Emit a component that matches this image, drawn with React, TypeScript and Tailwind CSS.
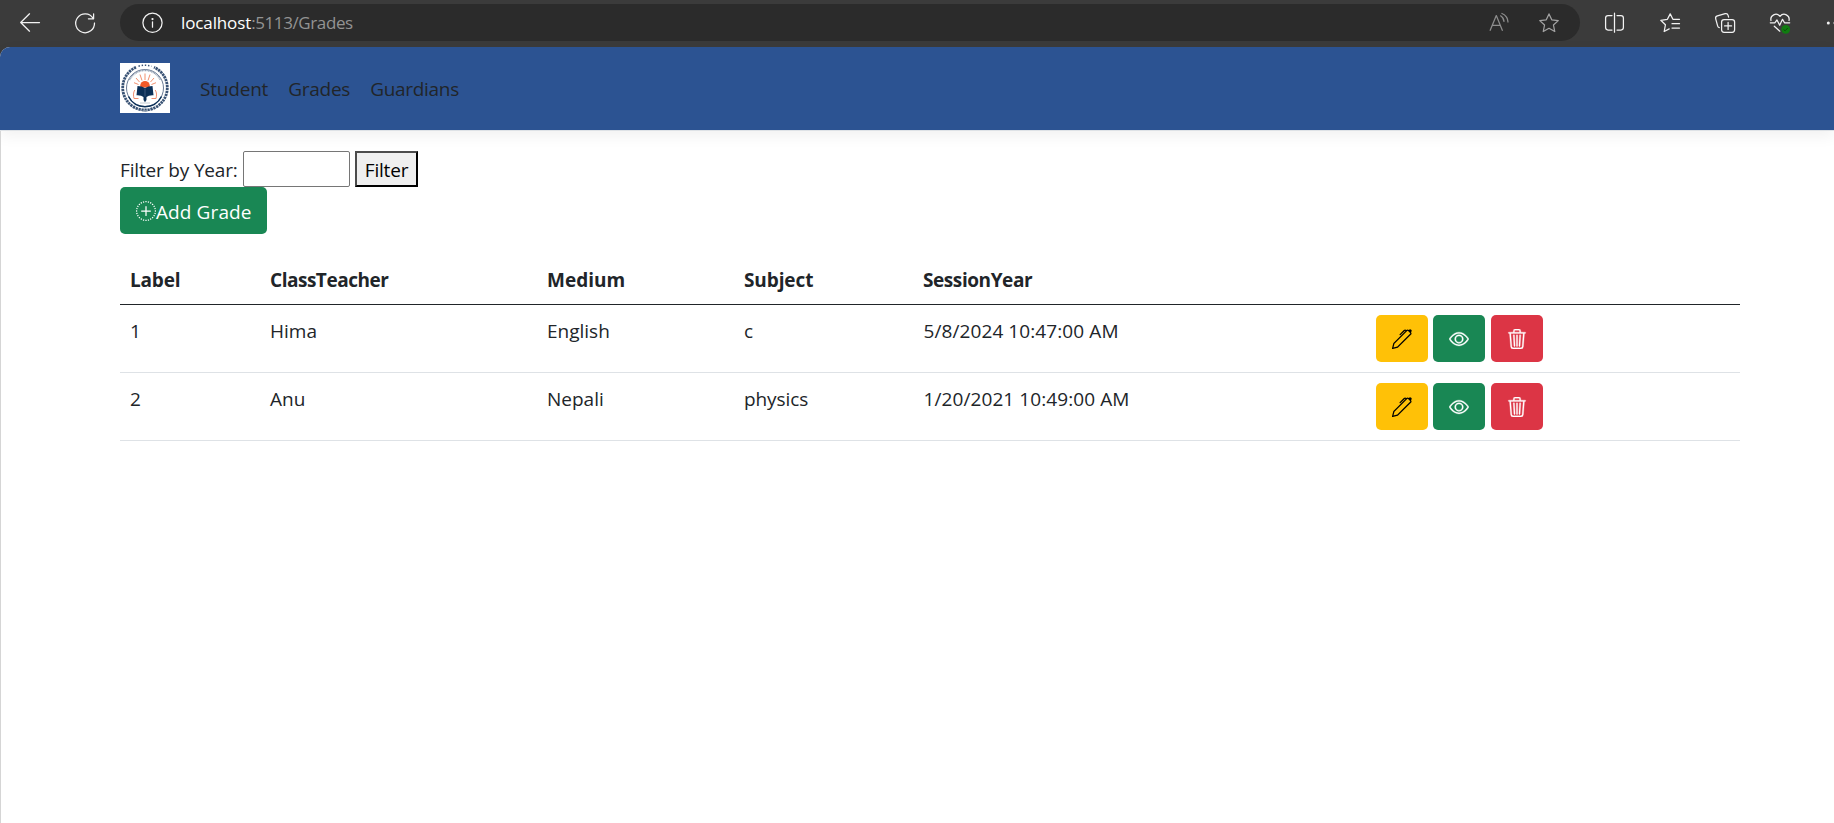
import type { ReactNode } from "react";
import { BsEye, BsPen, BsPlusCircleDotted, BsTrash3 } from "react-icons/bs";

function Glyph({ children, className = "" }: { children: ReactNode; className?: string }) {
  return (
    <svg
      viewBox="0 0 20 20"
      width="20"
      height="20"
      fill="none"
      stroke="currentColor"
      strokeWidth="1.25"
      strokeLinecap="round"
      strokeLinejoin="round"
      className={`shrink-0 overflow-visible ${className}`}
    >
      {children}
    </svg>
  );
}

function BrowserBar() {
  return (
    <div className="flex h-[47px] w-full overflow-hidden bg-[#3b3b3b] pt-1 text-[#f2f2f2]">
      <div className="flex h-[38px] items-center pl-5">
        <Glyph>
          <path d="M19.500 9.500H.8M9.500.8.7 9.500l8.800 8.700" />
        </Glyph>
        <Glyph className="ml-[35px]">
          <path d="M18 5.200A9.400 9.400 0 1 0 19.500 10M18.600.8v5h-5.200" />
        </Glyph>
        <div className="ml-[25px] flex h-[37px] w-[1460px] items-center self-start rounded-full bg-[#2b2b2b] pt-px pr-[21px] pl-[22px]">
          <Glyph>
            <circle cx="10.500" cy="9.800" r="9.600" />
            <path d="M10.500 8.800v5.400" />
            <circle cx="10.500" cy="6" r=".5" fill="currentColor" />
          </Glyph>
          <div className="ml-[19px] text-[17px] leading-6 text-[#939393]">
            <span className="tracking-[-0.12px] text-white">localhost</span>
            <span className="tracking-[-0.4px]">:5113/Grades</span>
          </div>
          <Glyph className="ml-auto text-[#8d8d8d]">
            <path d="M1.200 17.300 7.300 2.600l6 14.700M3.400 12.300h7.800M11.600 2.800c2 1.200 3.200 3.100 3.400 5.600M12.900.5c3.500 1.500 5.900 4.600 6.100 8.500" />
          </Glyph>
          <Glyph className="ml-[30px] text-[#a3a3a3]">
            <path d="m10 .9 2.750 5.900 6.500.8-4.800 4.400 1.300 6.500L10 15.300l-5.750 3.200 1.300-6.500L.75 7.600l6.500-.8Z" />
          </Glyph>
        </div>
        <Glyph className="ml-[25px]">
          <path d="M7 2.500H3A2.400 2.400 0 0 0 .6 4.900v9.700A2.400 2.400 0 0 0 3 17h4M12 2.500h4a2.400 2.400 0 0 1 2.400 2.400v9.700A2.400 2.400 0 0 1 16 17h-4M9.500.2v19" />
        </Glyph>
        <Glyph className="ml-[35px]">
          <path d="M19.500 6.300h-6.600L10.200.9 7.400 6.300.8 7.300l4.600 4.500-1.200 6.700 5-2.600M12 10.700h7.500M12 15h7.500" />
        </Glyph>
        <Glyph className="ml-[35px]">
          <rect x="6.600" y="6.500" width="13" height="12.800" rx="2.500" />
          <path d="M13.100 9.400v7M9.600 12.900h7M13.600 4.200l-.5-1.800A2.400 2.400 0 0 0 10.200.7L2.400 2.900A2.400 2.400 0 0 0 .7 5.800l2 7.300c.2.800.8 1.400 1.600 1.600" />
        </Glyph>
        <Glyph className="ml-[35px]">
          <path d="M1 7.500C-.2 2.600 6.300-1.200 10 3.400c3.700-4.600 10.200-.8 9 4.100M.3 9.800h4.500L7 7l2.700 5.300 2.800-6 2 3.500h5.200M4.300 13.200l5.500 5" />
          <circle cx="15.700" cy="16.300" r="4.400" fill="#107c10" stroke="none" />
          <path d="m13.900 16.800 1.200 1 2.400-2.500" stroke="#0b4d0b" strokeWidth="1" />
        </Glyph>
        <Glyph className="ml-[36px]">
          <circle cx="2.300" cy="10" r="1.500" fill="currentColor" stroke="none" />
          <circle cx="9" cy="10" r="1.500" fill="currentColor" stroke="none" />
        </Glyph>
      </div>
    </div>
  );
}

function Logo() {
  return (
    <svg viewBox="0 0 50 50" width="50" height="50" className="mb-px shrink-0 bg-white">
      <g fill="none" stroke="#3a5375">
        <path d="M16 4.300A22.300 22.300 0 1 0 34 4.300" strokeWidth="2.800" strokeDasharray="2.300 .7" />
        <circle cx="25" cy="25" r="18.500" stroke="#44597a" strokeWidth=".8" />
        <path d="M8.500 33.500A18.500 18.500 0 0 0 41.500 33.500" stroke="#0b2f57" strokeWidth="1.500" />
        <path d="M9.500 17a17.300 17.300 0 0 1 31 0" stroke="#93a0b3" strokeWidth="1.600" strokeDasharray="1 .6" />
        <path d="M18.500 3.200q6.500-1.900 13 0" strokeWidth="1.500" strokeDasharray="1.400 1.800" />
        <path d="M22.500 47.800h5" stroke="#8796a9" strokeWidth="1.300" />
        <path d="M20 40h10" stroke="#b5bfca" strokeWidth=".8" />
      </g>
      <path
        d="M25 17v-6.500M22 17.500l-2-6M28 17.500l2-6M19.500 19l-3.500-4M30.500 19l3.500-4M18.500 21.500l-4.500-1.800M31.500 21.500l4.500-1.800"
        stroke="#f2906f"
        strokeWidth="1"
      />
      <path d="M20.300 24.500v-2.200a4.700 4.300 0 0 1 9.400 0v2.200Z" fill="#f15a29" />
      <path d="M14.800 27c-1.600 2.500-1.600 5.500-.8 8.500h4.500M35.200 27c1.600 2.500 1.600 5.500.8 8.500h-4.500" fill="none" stroke="#f08d6e" strokeWidth="1" />
      <path d="M17.500 23q4.500 0 7.500 1.900 3-1.900 7.500-1.900l1 9.300q-4.800-.3-7 1.700v3l-1.500 2.200-1.500-2.200v-3q-2.200-2-7-1.700Z" fill="#0b2f57" />
      <path d="M25 25.500v8" stroke="#6d83a0" strokeWidth=".5" />
    </svg>
  );
}

function Navbar() {
  return (
    <header className="flex h-[84px] w-full items-center rounded-tl-[10px] border-b border-[#dee2e6] bg-[#2c5392] pl-[120px] text-[#212529] shadow-[0_5px_15px_rgba(0,0,0,0.06)]">
      <Logo />
      <nav className="ml-[30px] flex gap-5 pt-px leading-[30px]">
        <a className="tracking-[-0.2px]">Student</a>
        <a className="tracking-[-0.25px]">Grades</a>
        <a className="tracking-[-0.3px]">Guardians</a>
      </nav>
    </header>
  );
}

const headings = [
  { text: "Label", fit: "tracking-[-0.2px]" },
  { text: "ClassTeacher", fit: "tracking-[-0.48px]" },
  { text: "Medium", fit: "tracking-[0px]" },
  { text: "Subject", fit: "tracking-[-0.1px]" },
  { text: "SessionYear", fit: "tracking-[-0.42px]" },
];

const grades = [
  { label: "1", teacher: "Hima", medium: "English", subject: "c", session: "5/8/2024 10:47:00 AM" },
  { label: "2", teacher: "Anu", medium: "Nepali", subject: "physics", session: "1/20/2021 10:49:00 AM" },
];

const cell = "border-b border-[#dee2e6] px-[10px] pt-[11px] pb-0 text-left align-top leading-[30px]";
const action = "flex h-[47px] w-[52px] items-center justify-center rounded-[5px]";

function GradesTable() {
  return (
    <table className="mt-5 w-full table-fixed border-separate border-spacing-0">
      <colgroup>
        <col className="w-[140px]" />
        <col className="w-[277px]" />
        <col className="w-[197px]" />
        <col className="w-[179px]" />
        <col className="w-[453px]" />
        <col />
      </colgroup>
      <thead>
        <tr>
          {headings.map((h) => (
            <th
              key={h.text}
              className={`border-b border-[#212529] px-[10px] pt-[11px] pb-[9px] text-left leading-[30px] font-bold ${h.fit}`}
            >
              {h.text}
            </th>
          ))}
          <th className="border-b border-[#212529]" />
        </tr>
      </thead>
      <tbody>
        {grades.map((g) => (
          <tr key={g.label}>
            <td className={cell}>{g.label}</td>
            <td className={cell}>{g.teacher}</td>
            <td className={cell}>{g.medium}</td>
            <td className={`${cell} tracking-[-0.1px]`}>{g.subject}</td>
            <td className={`${cell} pl-[10.500px] tracking-[0.09px]`}>{g.session}</td>
            <td className="border-b border-[#dee2e6] p-[10px]">
              <div className="flex">
                <button className={`${action} bg-[#ffc107] text-black`}>
                  <BsPen size={20} />
                </button>
                <button className={`${action} ml-[5px] bg-[#198754] text-white`}>
                  <BsEye size={20} strokeWidth={0.25} />
                </button>
                <button className={`${action} ml-[6px] bg-[#dc3545] text-white`}>
                  <BsTrash3 size={20} strokeWidth={0.25} />
                </button>
              </div>
            </td>
          </tr>
        ))}
      </tbody>
    </table>
  );
}

export default function App() {
  return (
    <div className="flex h-[823px] w-full flex-col overflow-hidden bg-[#3b3b3b] font-['Open_Sans',sans-serif] text-[19px] text-[#212529]">
      <BrowserBar />
      <div className="flex-1 rounded-tl-[10px] bg-white">
        <Navbar />
        <main className="h-[692px] border-l border-[#d5d5d5] pt-5 pr-[94px] pl-[119px]">
          <form className="flex h-9 items-center">
            <label className="w-[123px] pt-[2px] leading-[30px] tracking-[-0.17px] whitespace-nowrap">Filter by Year:</label>
            <input className="h-9 w-[107px] rounded-[2px] border border-[#767676] bg-white" />
            <button
              type="button"
              className="ml-[5px] h-9 w-[63px] border-2 border-t-[#4c4c4c] border-r-black border-b-black border-l-[#4c4c4c] bg-[#efefef] pt-[2px] leading-[30px] tracking-[-0.2px] text-black"
            >
              Filter
            </button>
          </form>
          <button className="flex h-[47px] w-[147px] items-center rounded-[5px] bg-[#198754] pl-4 whitespace-nowrap text-white">
            <BsPlusCircleDotted size={20} className="shrink-0" />
            <span className="pt-[2px] leading-[30px] tracking-[0.1px]">Add Grade</span>
          </button>
          <GradesTable />
        </main>
      </div>
    </div>
  );
}
